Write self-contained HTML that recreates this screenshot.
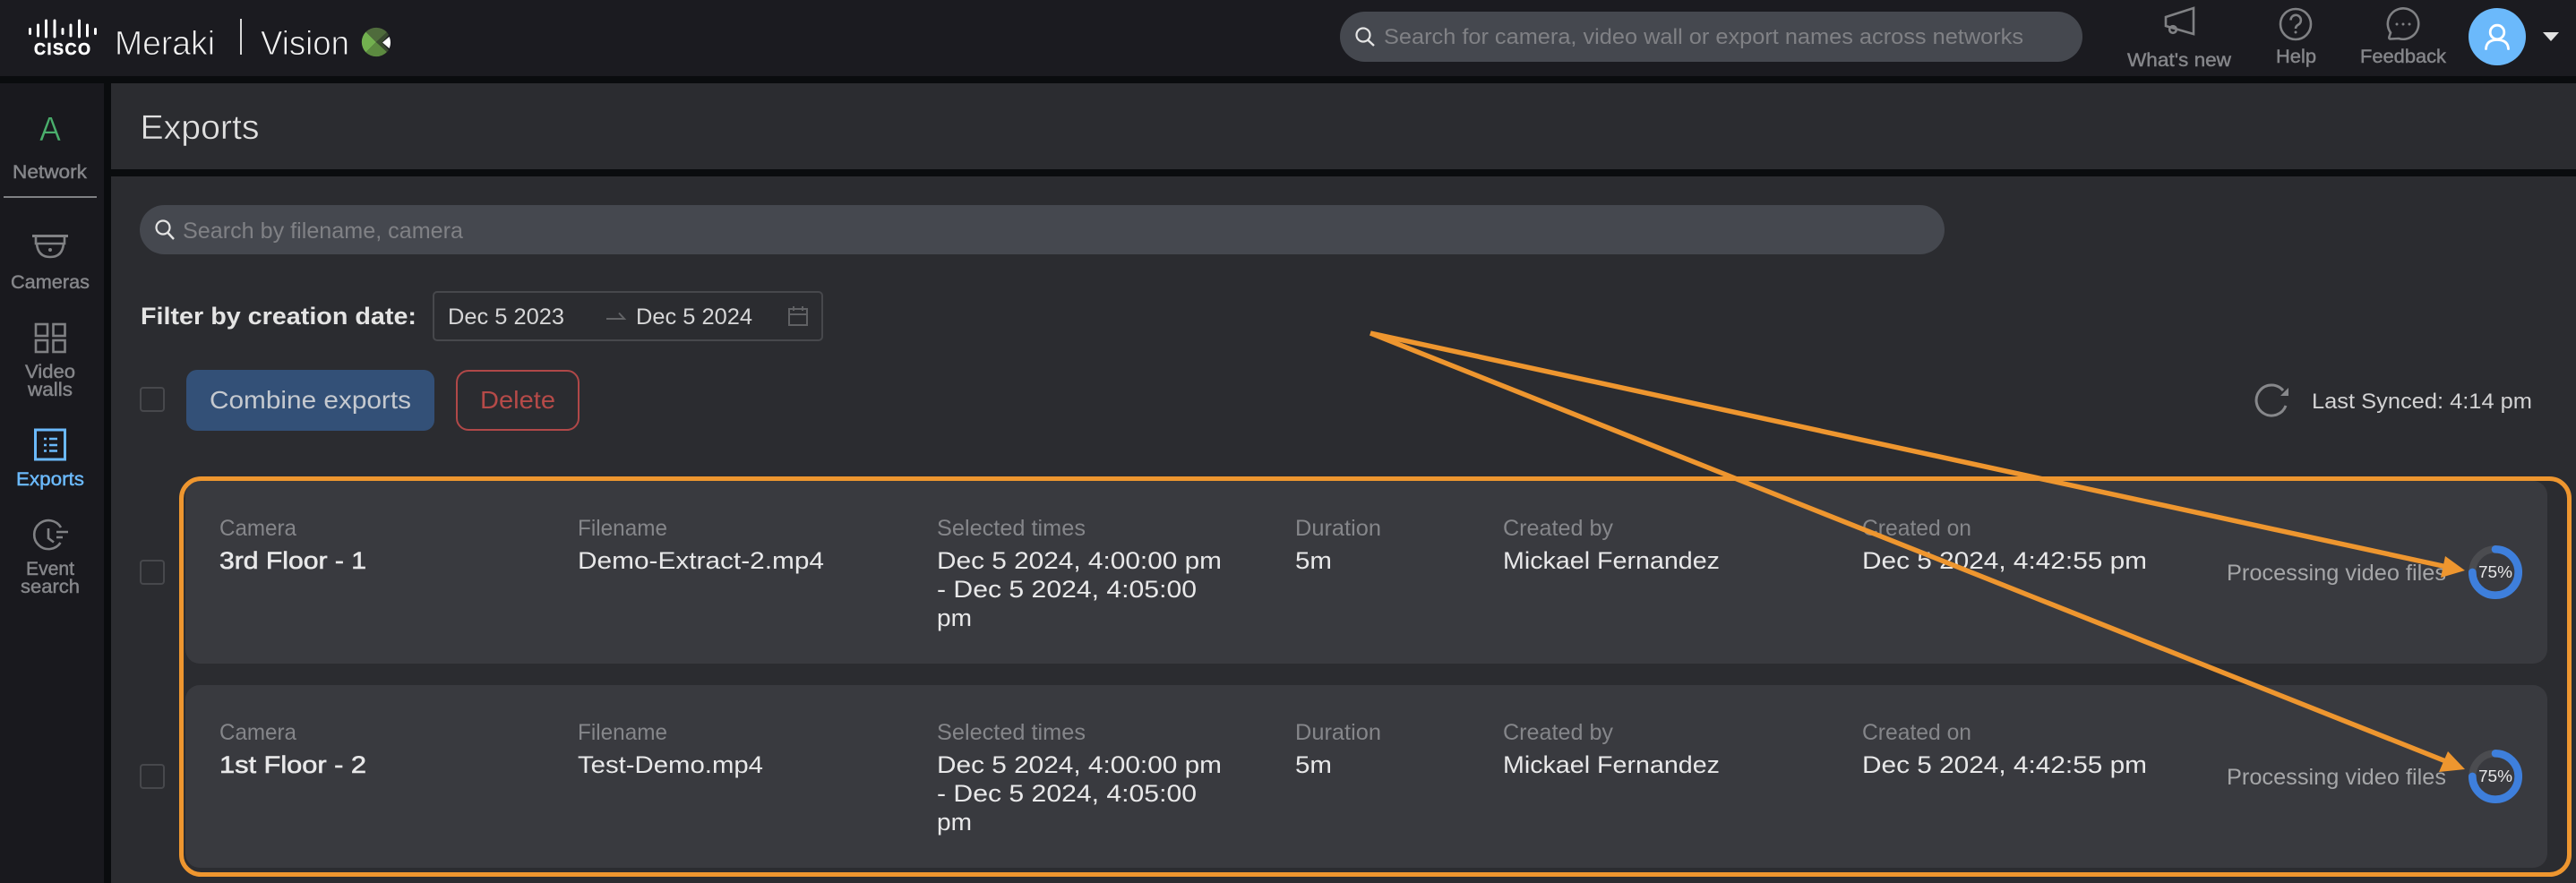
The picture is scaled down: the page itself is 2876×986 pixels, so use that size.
<!DOCTYPE html>
<html lang="en">
<head>
<meta charset="utf-8">
<title>Meraki Vision - Exports</title>
<style>
html,body{margin:0;padding:0;background:#2b2c30;width:2876px;height:986px;overflow:hidden}
svg{display:block}
text{font-family:"Liberation Sans",sans-serif;white-space:pre}
.nav{font-size:21px;fill:#85868a;stroke:#85868a;stroke-width:.45}
.lab{font-size:25px;fill:#85868a}
.val{font-size:27px;fill:#e8e8e9}
.ico{fill:none;stroke:#808184;stroke-width:2.6}
.blue{fill:none;stroke:#6bb9fb;stroke-width:3}
</style>
</head>
<body>
<svg width="2876" height="986" viewBox="0 0 2876 986" xmlns="http://www.w3.org/2000/svg">
<!-- backgrounds -->
<rect width="2876" height="986" fill="#2b2c30"/>
<rect width="2876" height="85" fill="#1b1b20"/>
<rect y="85" width="2876" height="8" fill="#0a0c0e"/>
<rect y="93" width="116" height="893" fill="#19191e"/>
<rect x="116" y="93" width="8" height="893" fill="#0a0c0e"/>
<rect x="124" y="189" width="2752" height="8" fill="#0a0c0e"/>

<!-- logo -->
<g stroke="#fff" stroke-width="3" stroke-linecap="round">
<path d="M33.500 32.500v5M42.500 28v12M51.500 23v18M61 23v18M70 32.500v5M79 28v12M88.500 23v18M97.500 28v12M106.500 32.500v5"/>
</g>
<text x="38" y="61" font-size="18" font-weight="700" fill="#fff" stroke="#fff" stroke-width=".5" textLength="63" lengthAdjust="spacing">CISCO</text>
<text x="128" y="61" font-size="38" fill="#f2f2f2" stroke="#1b1b20" stroke-width=".9" textLength="112" lengthAdjust="spacingAndGlyphs">Meraki</text>
<rect x="268" y="21" width="2" height="40" fill="#d8d8d8"/>
<text x="291" y="61" font-size="38" fill="#f2f2f2" stroke="#1b1b20" stroke-width=".9" textLength="99" lengthAdjust="spacingAndGlyphs">Vision</text>
<path d="M420 47L408.500 35.500A16.500 16.500 0 0 0 408.500 58.500Z" fill="#72b04f"/>
<path d="M420 47L408.500 35.500A16.500 16.500 0 0 1 432 36Z" fill="#4f6b3c"/>
<path d="M420 47L408.500 58.500A16.500 16.500 0 0 0 432 58Z" fill="#5c8a40"/>
<path d="M420 47L432 36L434 39L426.500 47.500L434 56L432 58Z" fill="#3a4a30"/>
<path d="M427 47.500L434.500 41C436.500 45 436.500 50 434.500 54Z" fill="#fff"/>

<!-- global search -->
<rect x="1496" y="13" width="829" height="56" rx="28" fill="#45484f"/>
<circle cx="1522" cy="39" r="7.500" fill="none" stroke="#e4e4e4" stroke-width="2.200"/>
<path d="M1527.500 45L1534 51" stroke="#e4e4e4" stroke-width="2.400" fill="none"/>
<text x="1545" y="49" font-size="24" fill="#808185" textLength="714" lengthAdjust="spacingAndGlyphs">Search for camera, video wall or export names across networks</text>

<!-- header actions -->
<path class="ico" d="M2418 19L2449 9V38L2418 29Z"/>
<circle class="ico" cx="2426" cy="33" r="3.800"/>
<text class="nav" x="2375" y="74" textLength="116" lengthAdjust="spacingAndGlyphs">What's new</text>
<circle class="ico" cx="2563" cy="27" r="17"/>
<path class="ico" d="M2557.500 22.500a5.700 5.700 0 1 1 8.500 5c-2 1.200-3 2.300-3 4.500"/>
<circle cx="2563" cy="36" r="1.500" fill="#808184"/>
<text class="nav" x="2541" y="70" textLength="45" lengthAdjust="spacingAndGlyphs">Help</text>
<path class="ico" d="M2669 36.500A17.200 17.200 0 1 1 2678 43L2669 43.500C2667.500 43.500 2667 42.500 2667.500 41Z"/>
<circle cx="2676" cy="27" r="1.500" fill="#808184"/><circle cx="2683" cy="27" r="1.500" fill="#808184"/><circle cx="2690" cy="27" r="1.500" fill="#808184"/>
<text class="nav" x="2635" y="70" textLength="96" lengthAdjust="spacingAndGlyphs">Feedback</text>
<ellipse cx="2788" cy="41" rx="32" ry="32" fill="#6bb9fb"/>
<circle cx="2788" cy="36" r="7.800" fill="none" stroke="#fff" stroke-width="2.800"/>
<path d="M2775.500 54.500C2776 47 2781 44.500 2788 44.500S2800 47 2800.500 54.500" fill="none" stroke="#fff" stroke-width="2.800" stroke-linecap="round"/>
<path d="M2839 36H2857L2848 46Z" fill="#e2e2e2"/>

<!-- sidebar -->
<text x="44" y="157" font-size="38" fill="#4aae6c" stroke="#19191e" stroke-width=".6" textLength="24" lengthAdjust="spacingAndGlyphs">A</text>
<text class="nav" x="14" y="199" textLength="83" lengthAdjust="spacingAndGlyphs">Network</text>
<rect x="4" y="219" width="104" height="2" fill="#7f8083"/>

<path d="M36 263.500H76" stroke="#808184" stroke-width="3" fill="none"/>
<path class="ico" d="M40 264V272H72V264M41 272C42 283 48 287 56 287S70 283 71 272"/>
<circle cx="56" cy="279" r="2" fill="#808184"/>
<text class="nav" x="12" y="322" textLength="88" lengthAdjust="spacingAndGlyphs">Cameras</text>

<g class="ico">
<rect x="40" y="362" width="13" height="13"/><rect x="59.500" y="362" width="13" height="13"/>
<rect x="40" y="380" width="13" height="13"/><rect x="59.500" y="380" width="13" height="13"/>
</g>
<text class="nav" x="28" y="422" textLength="56" lengthAdjust="spacingAndGlyphs">Video</text>
<text class="nav" x="31" y="442" textLength="50" lengthAdjust="spacingAndGlyphs">walls</text>

<rect class="blue" x="39.500" y="480" width="33" height="33"/>
<path d="M55 490H64M55 497H64M55 503.500H64" stroke="#6bb9fb" stroke-width="2.400" fill="none"/>
<path d="M49 490H52M49 497H52M49 503.500H52" stroke="#6bb9fb" stroke-width="2.400" fill="none"/>
<text x="18" y="542" font-size="21" fill="#6bb9fb" stroke="#6bb9fb" stroke-width=".45" textLength="76" lengthAdjust="spacingAndGlyphs">Exports</text>

<path class="ico" d="M68 589A16 16 0 1 0 67.500 606"/>
<path class="ico" d="M54 590V601L60 605.500"/>
<path d="M63 594H76M63 600H70" stroke="#808184" stroke-width="2.600" fill="none"/>
<text class="nav" x="29" y="642" textLength="54" lengthAdjust="spacingAndGlyphs">Event</text>
<text class="nav" x="23" y="662" textLength="66" lengthAdjust="spacingAndGlyphs">search</text>

<!-- page header -->
<rect x="124" y="93" width="2752" height="96" fill="#2b2c30"/>
<text x="156.500" y="155" font-size="38" fill="#e0e0e0" stroke="#2b2c30" stroke-width=".5" textLength="133" lengthAdjust="spacingAndGlyphs">Exports</text>

<!-- search by filename -->
<rect x="156" y="229" width="2015" height="55" rx="27.500" fill="#45484f"/>
<circle cx="182" cy="254" r="7.500" fill="none" stroke="#e4e4e4" stroke-width="2.200"/>
<path d="M187.500 260L194 267" stroke="#e4e4e4" stroke-width="2.400" fill="none"/>
<text x="204" y="266" font-size="25" fill="#808185" textLength="313" lengthAdjust="spacingAndGlyphs">Search by filename, camera</text>

<!-- filter -->
<text x="157" y="362" font-size="27" font-weight="700" fill="#e4e4e4" textLength="308" lengthAdjust="spacingAndGlyphs">Filter by creation date:</text>
<rect x="484" y="326" width="434" height="54" rx="4" fill="none" stroke="#47484c" stroke-width="2"/>
<text x="500" y="362" font-size="25" fill="#d6d6d7" textLength="130" lengthAdjust="spacingAndGlyphs">Dec 5 2023</text>
<path d="M677 356H697L691 349.500" fill="none" stroke="#626366" stroke-width="2"/>
<text x="710" y="362" font-size="25" fill="#d6d6d7" textLength="130" lengthAdjust="spacingAndGlyphs">Dec 5 2024</text>
<g fill="none" stroke="#606164" stroke-width="2"><rect x="881" y="345" width="20" height="18"/><path d="M881 351H901M886 342V347M896 342V347"/></g>

<!-- actions -->
<rect x="157" y="433" width="26" height="26" rx="3" fill="none" stroke="#47484c" stroke-width="2"/>
<rect x="208" y="413" width="277" height="68" rx="12" fill="#335077"/>
<text x="234" y="456" font-size="28" fill="#c5c9cf" textLength="225" lengthAdjust="spacingAndGlyphs">Combine exports</text>
<rect x="510" y="414" width="136" height="66" rx="13" fill="none" stroke="#b04848" stroke-width="2"/>
<text x="536" y="456" font-size="28" fill="#b54a48" textLength="84" lengthAdjust="spacingAndGlyphs">Delete</text>

<path d="M2552 453A17 17 0 1 1 2549 436" fill="none" stroke="#87888b" stroke-width="3"/>
<path d="M2555 433V442H2546Z" fill="#87888b"/>
<text x="2581" y="456" font-size="24" fill="#d2d2d3" textLength="246" lengthAdjust="spacingAndGlyphs">Last Synced: 4:14 pm</text>

<!-- row 1 -->
<rect x="157" y="626" width="26" height="26" rx="3" fill="none" stroke="#47484c" stroke-width="2"/>
<rect x="207" y="537" width="2637" height="204" rx="16" fill="#393a3f"/>
<text class="lab" x="245" y="598" textLength="86" lengthAdjust="spacingAndGlyphs">Camera</text>
<text class="val" x="245" y="635" stroke="#e8e8e9" stroke-width=".6" textLength="164" lengthAdjust="spacingAndGlyphs">3rd Floor - 1</text>
<text class="lab" x="645" y="598" textLength="100" lengthAdjust="spacingAndGlyphs">Filename</text>
<text class="val" x="645" y="635" textLength="275" lengthAdjust="spacingAndGlyphs">Demo-Extract-2.mp4</text>
<text class="lab" x="1046" y="598" textLength="166" lengthAdjust="spacingAndGlyphs">Selected times</text>
<text class="val" x="1046" y="635" textLength="318" lengthAdjust="spacingAndGlyphs">Dec 5 2024, 4:00:00 pm</text>
<text class="val" x="1046" y="667" textLength="290" lengthAdjust="spacingAndGlyphs">- Dec 5 2024, 4:05:00</text>
<text class="val" x="1046" y="699" textLength="39" lengthAdjust="spacingAndGlyphs">pm</text>
<text class="lab" x="1446" y="598" textLength="96" lengthAdjust="spacingAndGlyphs">Duration</text>
<text class="val" x="1446" y="635" textLength="41" lengthAdjust="spacingAndGlyphs">5m</text>
<text class="lab" x="1678" y="598" textLength="123" lengthAdjust="spacingAndGlyphs">Created by</text>
<text class="val" x="1678" y="635" textLength="242" lengthAdjust="spacingAndGlyphs">Mickael Fernandez</text>
<text class="lab" x="2079" y="598" textLength="122" lengthAdjust="spacingAndGlyphs">Created on</text>
<text class="val" x="2079" y="635" textLength="318" lengthAdjust="spacingAndGlyphs">Dec 5 2024, 4:42:55 pm</text>
<text x="2486" y="648" font-size="25" fill="#a5a6a8" textLength="245" lengthAdjust="spacingAndGlyphs">Processing video files</text>
<circle cx="2786" cy="639" r="25.700" fill="none" stroke="#4b4c50" stroke-width="8"/>
<path d="M2786 613.300A25.700 25.700 0 1 1 2760.300 639" fill="none" stroke="#3e7fdc" stroke-width="8.700" stroke-linecap="round"/>
<text x="2767" y="645" font-size="18" fill="#e8e8e9" textLength="38" lengthAdjust="spacingAndGlyphs">75%</text>

<!-- row 2 -->
<rect x="157" y="854" width="26" height="26" rx="3" fill="none" stroke="#47484c" stroke-width="2"/>
<rect x="207" y="765" width="2637" height="204" rx="16" fill="#393a3f"/>
<text class="lab" x="245" y="826" textLength="86" lengthAdjust="spacingAndGlyphs">Camera</text>
<text class="val" x="245" y="863" stroke="#e8e8e9" stroke-width=".6" textLength="164" lengthAdjust="spacingAndGlyphs">1st Floor - 2</text>
<text class="lab" x="645" y="826" textLength="100" lengthAdjust="spacingAndGlyphs">Filename</text>
<text class="val" x="645" y="863" textLength="207" lengthAdjust="spacingAndGlyphs">Test-Demo.mp4</text>
<text class="lab" x="1046" y="826" textLength="166" lengthAdjust="spacingAndGlyphs">Selected times</text>
<text class="val" x="1046" y="863" textLength="318" lengthAdjust="spacingAndGlyphs">Dec 5 2024, 4:00:00 pm</text>
<text class="val" x="1046" y="895" textLength="290" lengthAdjust="spacingAndGlyphs">- Dec 5 2024, 4:05:00</text>
<text class="val" x="1046" y="927" textLength="39" lengthAdjust="spacingAndGlyphs">pm</text>
<text class="lab" x="1446" y="826" textLength="96" lengthAdjust="spacingAndGlyphs">Duration</text>
<text class="val" x="1446" y="863" textLength="41" lengthAdjust="spacingAndGlyphs">5m</text>
<text class="lab" x="1678" y="826" textLength="123" lengthAdjust="spacingAndGlyphs">Created by</text>
<text class="val" x="1678" y="863" textLength="242" lengthAdjust="spacingAndGlyphs">Mickael Fernandez</text>
<text class="lab" x="2079" y="826" textLength="122" lengthAdjust="spacingAndGlyphs">Created on</text>
<text class="val" x="2079" y="863" textLength="318" lengthAdjust="spacingAndGlyphs">Dec 5 2024, 4:42:55 pm</text>
<text x="2486" y="876" font-size="25" fill="#a5a6a8" textLength="245" lengthAdjust="spacingAndGlyphs">Processing video files</text>
<circle cx="2786" cy="867" r="25.700" fill="none" stroke="#4b4c50" stroke-width="8"/>
<path d="M2786 841.300A25.700 25.700 0 1 1 2760.300 867" fill="none" stroke="#3e7fdc" stroke-width="8.700" stroke-linecap="round"/>
<text x="2767" y="873" font-size="18" fill="#e8e8e9" textLength="38" lengthAdjust="spacingAndGlyphs">75%</text>

<!-- annotations -->
<rect x="202.500" y="534.500" width="2666" height="442" rx="22" fill="none" stroke="#ee962f" stroke-width="5"/>
<path d="M1530 372L2732 633" stroke="#ee962f" stroke-width="5.500" fill="none"/>
<path d="M2752 637L2730 621L2725 645Z" fill="#ee962f"/>
<path d="M1530 372L2733 851" stroke="#ee962f" stroke-width="5.500" fill="none"/>
<path d="M2752 859L2733 839L2723 862Z" fill="#ee962f"/>
</svg>
</body>
</html>
